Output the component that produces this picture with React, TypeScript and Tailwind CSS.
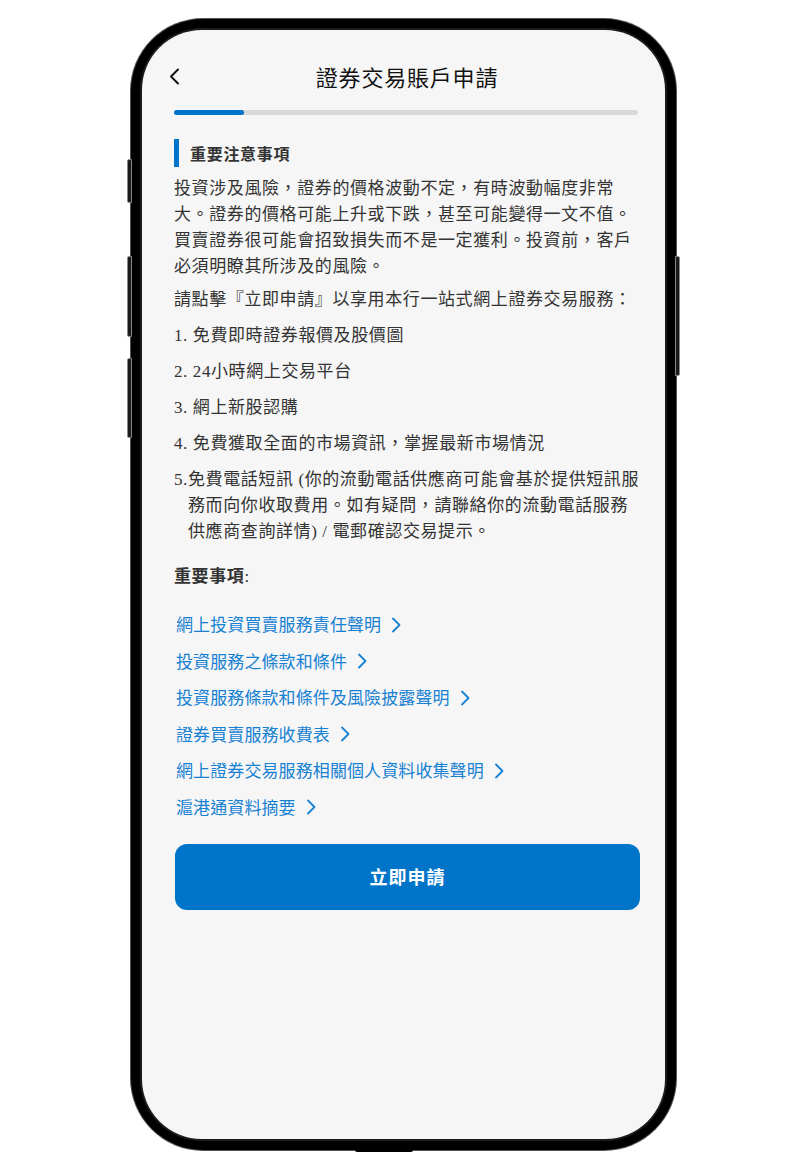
import React from "react";

const serifStack = {
  fontFamily: '"Liberation Serif", "Noto Sans CJK TC", serif',
};
const sansStack = {
  fontFamily: '"Noto Sans CJK TC", "Noto Sans", sans-serif',
};

function Chevron({ className = "" }: { className?: string }) {
  return (
    <svg width="10" height="16" viewBox="0 0 10 16" className={className} fill="none">
      <polyline points="2,1.5 8.5,8 2,14.5" stroke="#1681d2" strokeWidth="1.8" strokeLinecap="round" strokeLinejoin="round" />
    </svg>
  );
}

const links = [
  "網上投資買賣服務責任聲明",
  "投資服務之條款和條件",
  "投資服務條款和條件及風險披露聲明",
  "證券買賣服務收費表",
  "網上證券交易服務相關個人資料收集聲明",
  "滬港通資料摘要",
];

export default function App() {
  return (
    <div className="w-[800px] h-[1170px] bg-white overflow-hidden">
      <div className="relative ml-[131px] mt-[19px] w-[545px] h-[1131px]">
        {/* side buttons */}
        <div className="absolute left-[-4px] top-[140px] w-[5px] h-[44px] rounded-l-[2px] bg-[#1a1a1a] border border-[#8a8a8a]" />
        <div className="absolute left-[-4px] top-[237px] w-[5px] h-[81px] rounded-l-[2px] bg-[#1a1a1a] border border-[#8a8a8a]" />
        <div className="absolute left-[-4px] top-[339px] w-[5px] h-[80px] rounded-l-[2px] bg-[#1a1a1a] border border-[#8a8a8a]" />
        <div className="absolute right-[-4px] top-[237px] w-[5px] h-[120px] rounded-r-[2px] bg-[#1a1a1a] border border-[#8a8a8a]" />
        <div className="absolute left-[224px] bottom-[-2px] w-[58px] h-[3px] rounded-b-[2px] bg-black" />

        <div className="w-full h-full rounded-[72px] bg-black p-[11px] shadow-[0_0_0_1px_#555]">
          <div className="w-full h-full rounded-[60px] bg-[#f6f6f6] overflow-hidden ring-[2px] ring-[#1c1c1c] pl-[32px] pr-[24px]">
            {/* header */}
            <div className="relative flex items-center justify-center pt-[30px] h-[62px]" style={sansStack}>
              <svg width="11" height="17" viewBox="0 0 11 17" className="absolute left-[-5px] top-[38px]" fill="none">
                <polyline points="9,1.5 2,8.5 9,15.5" stroke="#111" strokeWidth="2" strokeLinecap="round" strokeLinejoin="round" />
              </svg>
              <div className="text-[22px] leading-[32px] font-normal tracking-[0.8px] text-[#111] ml-[-1px]">證券交易賬戶申請</div>
            </div>
            {/* progress */}
            <div className="mt-[18px] h-[5px] rounded-full bg-[#d9d9d9] w-[464px]">
              <div className="h-[5px] w-[70px] rounded-full bg-[#0073cc]" />
            </div>
            {/* section header */}
            <div className="mt-[24px] flex items-center h-[28px]">
              <div className="w-[5px] h-[28px] bg-[#0073cc]" />
              <div className="ml-[11px] text-[16px] font-bold tracking-[0.7px] text-[#333]" style={sansStack}>重要注意事項</div>
            </div>
            {/* body */}
            <div className="text-[17px] leading-[26px] tracking-[0.6px] text-[#333] w-[468px]" style={serifStack}>
              <p className="mt-[9px]">投資涉及風險，證券的價格波動不定，有時波動幅度非常大。證券的價格可能上升或下跌，甚至可能變得一文不值。買賣證券很可能會招致損失而不是一定獲利。投資前，客戶必須明瞭其所涉及的風險。</p>
              <p className="mt-[7px]">請點擊『立即申請』以享用本行一站式網上證券交易服務：</p>
              <p className="mt-[10px]">1. 免費即時證券報價及股價圖</p>
              <p className="mt-[10px]">2. 24小時網上交易平台</p>
              <p className="mt-[10px]">3. 網上新股認購</p>
              <p className="mt-[10px]">4. 免費獲取全面的市場資訊，掌握最新市場情況</p>
              <p className="mt-[10px] pl-[14px] -indent-[14px]">5.免費電話短訊 (你的流動電話供應商可能會基於提供短訊服務而向你收取費用。如有疑問，請聯絡你的流動電話服務供應商查詢詳情) / 電郵確認交易提示。</p>
              <p className="mt-[19px] font-bold">重要事項<span className="font-normal">:</span></p>
            </div>
            {/* links */}
            <div className="mt-[21px] flex flex-col gap-[10.6px]" style={sansStack}>
              {links.map((l) => (
                <div key={l} className="flex items-center h-[26px] pl-[2px]">
                  <span className="text-[17px] leading-[26px] tracking-[0.1px] text-[#1681d2]">{l}</span>
                  <Chevron className="ml-[10px] mt-[1px]" />
                </div>
              ))}
            </div>
            {/* button */}
            <div className="mt-[24px] ml-[1px] w-[465px] h-[66px] rounded-[12px] bg-[#0074c9] flex items-center justify-center">
              <span className="text-[18px] font-bold tracking-[1px] text-white" style={sansStack}>立即申請</span>
            </div>
          </div>
        </div>
      </div>
    </div>
  );
}
